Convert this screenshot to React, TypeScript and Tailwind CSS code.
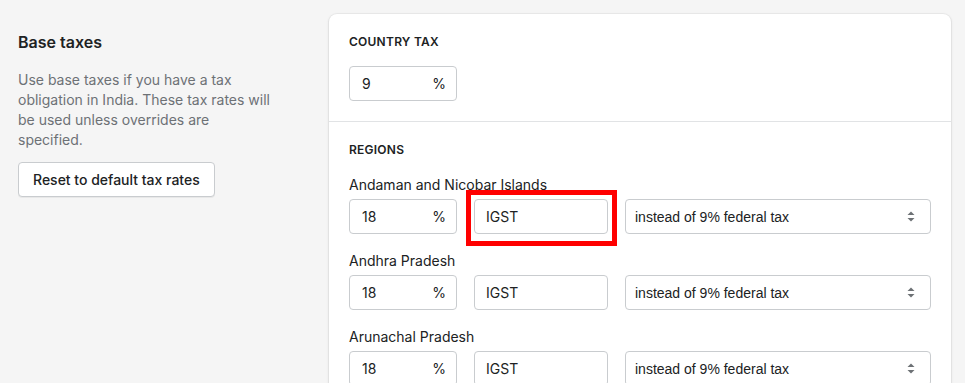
import React from "react";

const regions = ["Andaman and Nicobar Islands", "Andhra Pradesh", "Arunachal Pradesh"];

function RateInput({ value }: { value: string }) {
  return (
    <div className="flex h-[35px] w-[108px] shrink-0 items-center justify-between rounded-[4px] border border-[#c9cccf] bg-white pl-3 pr-[10px] text-sm text-[#202223]">
      <span>{value}</span>
      <span>%</span>
    </div>
  );
}

function CaretIcon() {
  return (
    <svg width="8" height="11" viewBox="0 0 8 11" className="text-[#6d7175]">
      <path d="M4 0.5 L7.5 4 H0.5 Z" fill="currentColor" />
      <path d="M4 10.5 L7.5 7 H0.5 Z" fill="currentColor" />
    </svg>
  );
}

export default function App() {
  return (
    <div className="flex min-h-screen bg-[#f5f5f5] text-[#202223] [font-family:Inter,'Noto_Sans',sans-serif]">
      <div className="w-[329px] shrink-0 pl-[18px] pt-[30px]">
        <h2 className="text-base font-semibold leading-6">Base taxes</h2>
        <p className="mt-4 w-[256px] text-sm leading-5 text-[#6d7175]">
          Use base taxes if you have a tax obligation in India. These tax rates will be used unless overrides are specified.
        </p>
        <button className="mt-3 h-[35px] rounded-[4px] border border-[#c9cccf] bg-white px-[14px] text-sm font-medium text-[#202223] shadow-[0_1px_0_rgba(0,0,0,0.05)]">
          Reset to default tax rates
        </button>
      </div>

      <div className="mt-[14px] mr-[14px] flex-1 self-start rounded-lg bg-white shadow-[0_0_0_1px_rgba(63,63,68,0.05),0_1px_3px_rgba(63,63,68,0.15)]">
        <div className="border-b border-[#e1e3e5] p-5">
          <h3 className="text-xs font-semibold uppercase leading-4 tracking-[0.02em]">Country tax</h3>
          <div className="mt-4">
            <RateInput value="9" />
          </div>
        </div>
        <div className="p-5">
          <h3 className="text-xs font-semibold uppercase leading-4 tracking-[0.02em]">Regions</h3>
          <div className="mt-[17px] flex flex-col gap-[17px]">
            {regions.map((name, i) => (
              <div key={name}>
                <div className="text-sm leading-5">{name}</div>
                <div className="mt-1 flex gap-[17px]">
                  <RateInput value="18" />
                  <div className="relative w-[134px] shrink-0">
                    <div className="flex h-[35px] items-center rounded-[4px] border border-[#c9cccf] bg-white px-[11px] text-sm">
                      IGST
                    </div>
                    {i === 0 && (
                      <div className="pointer-events-none absolute -top-[9px] -bottom-[12px] -left-[8px] -right-[9px] border-[5px] border-[#ff0000]" />
                    )}
                  </div>
                  <div className="flex h-[35px] flex-1 items-center justify-between rounded-[4px] border border-[#c9cccf] bg-white pl-[9px] pr-[15px] text-sm [font-family:'Liberation_Sans',Arial,sans-serif]">
                    <span>instead of 9% federal tax</span>
                    <CaretIcon />
                  </div>
                </div>
              </div>
            ))}
          </div>
        </div>
      </div>
    </div>
  );
}
